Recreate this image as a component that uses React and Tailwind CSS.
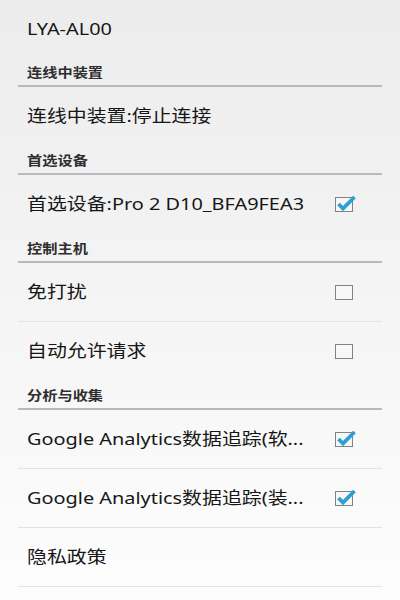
import React from 'react'

const font = { fontFamily: '"Noto Sans", "Noto Sans CJK SC", sans-serif' }

const Stretch = ({ children, className = '' }) => (
    <span className={`inline-block origin-left scale-x-[1.17] whitespace-nowrap ${className}`}>{children}</span>
)

const Checkbox = ({ checked }) => (
    <div className="relative w-[18px] h-[15px] border border-[#828282] bg-[#f7f7f7]">
        {checked && (
            <svg className="absolute left-[-1px] top-[-5px]" width="22" height="20" viewBox="0 0 22 20">
                <polyline points="3.5,11 8,15.5 19.5,4" fill="none" stroke="#2e9fd3" strokeWidth="3.8" strokeLinejoin="miter" />
            </svg>
        )}
    </div>
)

const Header = ({ title }) => (
    <div className="mx-[18px]">
        <div className="h-[28px] flex items-center pt-[3px] pl-[9px]">
            <Stretch className="text-[13px] font-bold text-[#2e2e2e]">{title}</Stretch>
        </div>
        <div className="h-[2px] bg-[#b9b9b9]"></div>
    </div>
)

const Row = ({ label, checkbox, checked, divider }) => (
    <div className="mx-[18px]">
        <div className="h-[58px] flex items-center justify-between pl-[9px] pr-[29px]">
            <Stretch className="text-[17px] text-[#161616]">{label}</Stretch>
            {checkbox && <Checkbox checked={checked} />}
        </div>
        {divider && <div className="h-px bg-[#e3e3e3]"></div>}
    </div>
)

const App = () => {
    return (
        <div className="w-[400px] h-[600px] overflow-hidden bg-gradient-to-b from-[#ececec] to-[#fdfdfd]" style={font}>
            <div className="h-[57px] flex items-center pl-[27px]">
                <Stretch className="text-[17px] text-[#161616]">LYA-AL00</Stretch>
            </div>

            <Header title="连线中装置" />
            <Row label="连线中装置:停止连接" />

            <Header title="首选设备" />
            <Row label="首选设备:Pro 2 D10_BFA9FEA3" checkbox checked />

            <Header title="控制主机" />
            <Row label="免打扰" checkbox divider />
            <Row label="自动允许请求" checkbox />

            <Header title="分析与收集" />
            <Row label="Google Analytics数据追踪(软..." checkbox checked divider />
            <Row label="Google Analytics数据追踪(装..." checkbox checked divider />
            <Row label="隐私政策" divider />
        </div>
    )
}

export default App
